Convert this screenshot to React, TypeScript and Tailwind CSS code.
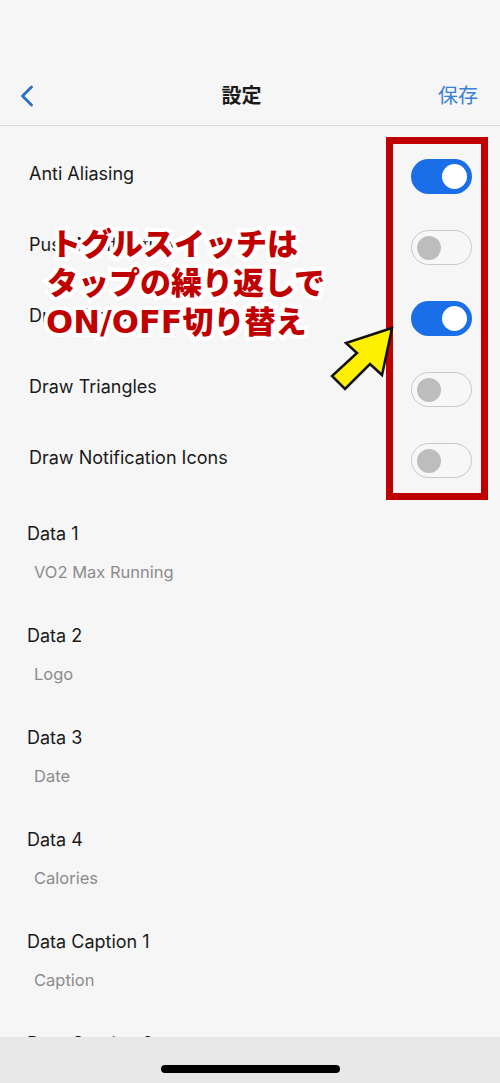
import { ChevronLeft } from "lucide-react";

const toggles = [
  { label: "Anti Aliasing", on: true },
  { label: "Push Notifications", on: false },
  { label: "Draw Circles", on: true },
  { label: "Draw Triangles", on: false },
  { label: "Draw Notification Icons", on: false },
];

const dataFields = [
  { title: "Data 1", value: "VO2 Max Running" },
  { title: "Data 2", value: "Logo" },
  { title: "Data 3", value: "Date" },
  { title: "Data 4", value: "Calories" },
  { title: "Data Caption 1", value: "Caption" },
  { title: "Data Caption 2", value: "Caption" },
];

function Toggle({ on }: { on: boolean }) {
  if (on) {
    return (
      <div className="flex h-[35px] w-[61px] items-center justify-end rounded-full bg-[#1a6fe8] pr-[5px]">
        <div className="h-[25px] w-[25px] rounded-full bg-white" />
      </div>
    );
  }
  return (
    <div className="flex h-[35px] w-[61px] items-center rounded-full border-[1.5px] border-[#c9c9c9] bg-[#f7f7f7] pl-[5px]">
      <div className="h-[24px] w-[24px] rounded-full bg-[#bdbdbd]" />
    </div>
  );
}

export default function App() {
  return (
    <div
      className="relative h-[1083px] w-[500px] overflow-hidden bg-[#f6f6f6] text-[#1a1a1a]"
      style={{ fontFamily: "Inter, 'Noto Sans CJK JP', sans-serif" }}
    >
      {/* status bar space */}
      <div className="h-[60px]" />

      {/* nav bar */}
      <div className="flex h-[66px] items-center justify-between border-b border-[#d9d9d9] pl-[9px] pr-[22px] pt-[6px]">
        <ChevronLeft size={36} strokeWidth={1.9} className="text-[#2f6fc6]" />
        <span className="text-[20px] font-bold">設定</span>
        <span className="text-[20px] text-[#3a80d9]">保存</span>
      </div>

      {/* toggle rows */}
      <div className="pt-[15px]">
        {toggles.map(t => (
          <div key={t.label} className="flex h-[71px] items-center justify-between pl-[29px] pr-[28px]">
            <span className="-mt-[7px] text-[18px]">{t.label}</span>
            <Toggle on={t.on} />
          </div>
        ))}
      </div>

      {/* data fields */}
      <div className="pt-[15px]">
        {dataFields.map(f => (
          <div key={f.title} className="flex h-[102px] flex-col pl-[27px] pt-[10px]">
            <span className="text-[18px] leading-[26px]">{f.title}</span>
            <span className="mt-[13px] pl-[7px] text-[16.5px] leading-[24px] text-[#8c8c8c]">{f.value}</span>
          </div>
        ))}
      </div>

      {/* annotation: red frame */}
      <div className="absolute left-[386px] top-[137px] h-[363px] w-[102px] border-[7px] border-[#c00000]" />

      {/* annotation: caption */}
      <div
        className="absolute left-[46px] top-[222px] text-[31px] font-black leading-[39px] text-[#c00000] [-webkit-text-stroke:8px_white] [paint-order:stroke_fill]"
        style={{ fontFamily: "'Noto Sans CJK JP', sans-serif" }}
      >
        <div className="pl-[4px]">トグルスイッチは</div>
        <div className="pl-[1px]">タップの繰り返しで</div>
        <div>
          <span className="text-[32px] font-bold" style={{ fontFamily: "'DejaVu Sans', sans-serif" }}>
            ON/OFF
          </span>
          切り替え
        </div>
      </div>

      {/* annotation: arrow */}
      <svg className="absolute left-0 top-0" width="500" height="500" viewBox="0 0 500 500">
        <polygon
          points="392,328 346,343 357,353 332,376 345,389 370,364 382,375"
          fill="#ffef00"
          stroke="#111"
          strokeWidth="2.5"
          strokeLinejoin="miter"
        />
      </svg>

      {/* home indicator bar */}
      <div className="absolute bottom-0 left-0 flex h-[46px] w-full items-start justify-center bg-[#e8e8e8] pt-[28px]">
        <div className="h-[8px] w-[179px] rounded-full bg-black" />
      </div>
    </div>
  );
}
